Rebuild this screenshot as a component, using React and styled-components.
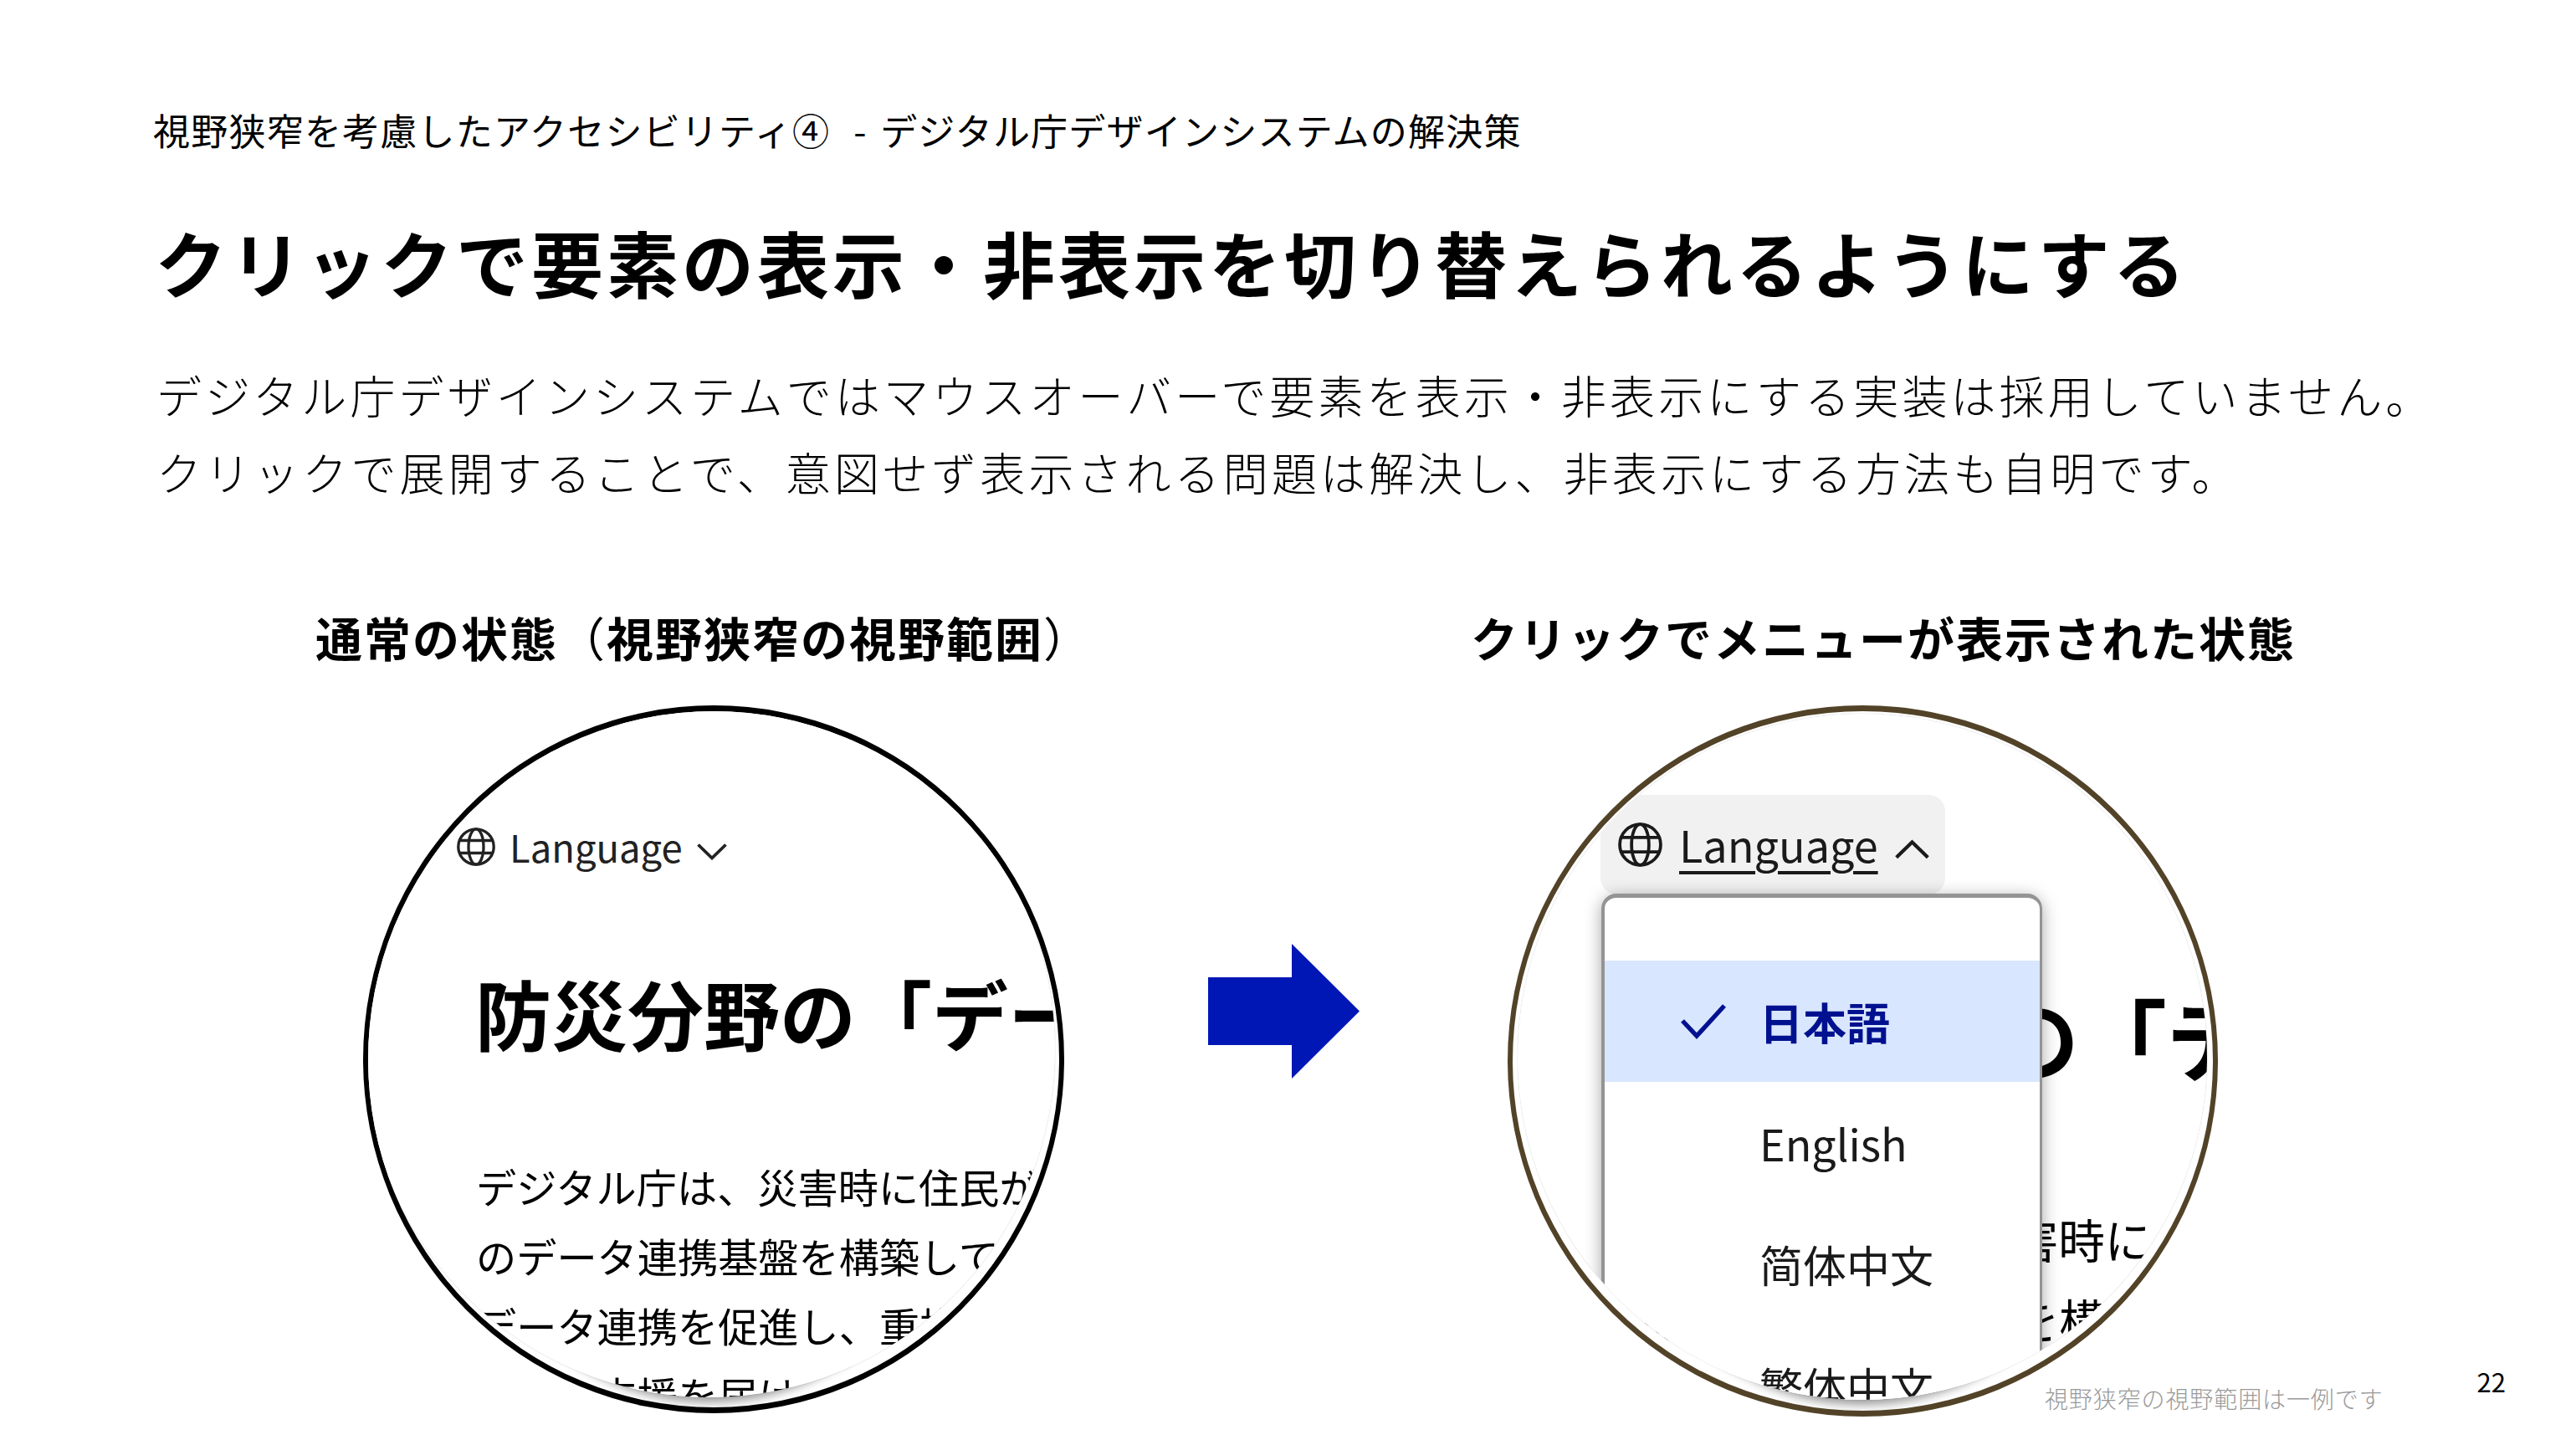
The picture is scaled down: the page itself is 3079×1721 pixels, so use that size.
import React from "react";
import styled, { createGlobalStyle } from "styled-components";

const GlobalStyle = createGlobalStyle`
    body {
        margin: 0;
        background: #fff;
        color: #000;
        font-family: "Noto Sans CJK JP", sans-serif;
    }
`

const Slide = styled.main`
    box-sizing: border-box;
    width: 3079px;
    height: 1721px;
    padding-top: 125px;
    overflow: hidden;
    background: #fff;
`

const Header = styled.header`
    padding-left: 183px;
    white-space: nowrap;
`

const Eyebrow = styled.p`
    margin: 0;
    font-size: 44px;
    line-height: 60px;
    letter-spacing: 1.22px;
`

const Dash = styled.span`
    display: inline-block;
    width: 60px;
    padding-left: 28px;
    box-sizing: border-box;
`

const Title = styled.h1`
    margin: 68px 0 0 2px;
    font-size: 86px;
    font-weight: 700;
    line-height: 120px;
    letter-spacing: 4px;
`

const Lead = styled.p`
    margin: 53px 0 0 4px;
    font-size: 54px;
    font-weight: 300;
    line-height: 92px;
    letter-spacing: 4.12px;
`

const Stage = styled.section`
    display: flex;
    align-items: flex-start;
    margin-top: 111px;
    padding-left: 434px;
`

const Figure = styled.figure`
    display: flex;
    flex-direction: column;
    gap: 42px;
    width: ${props => props.$width}px;
    margin: 0;
`

const Caption = styled.figcaption`
    margin-left: ${props => props.$shift}px;
    font-size: 56px;
    font-weight: 700;
    line-height: 80px;
    letter-spacing: 2px;
    white-space: nowrap;
`

const Paren = styled.span`
    font-weight: 400;
`

const Lens = styled.div`
    box-sizing: border-box;
    height: ${props => props.$height}px;
    border: solid ${props => props.$color};
    border-width: 7px 6px;
    border-radius: 50%;
    overflow: hidden;
`

// round cutout of the page seen through the lens
const View = styled.div`
    position: relative;
    box-sizing: border-box;
    border-radius: 50%;
    overflow: hidden;
    background: #fff;
    white-space: nowrap;
`

const ViewShadow = styled.div`
    width: ${props => props.$w}px;
    height: ${props => props.$h}px;
    margin: ${props => props.$offset};
    border-radius: 50%;
    box-shadow: 0 0 1px rgba(0, 0, 0, 0.45), 0 120px 12px -114px rgba(0, 0, 0, 0.4);

    ${View} {
        height: 100%;
    }
`

const LanguageLabel = styled.div`
    display: flex;
    align-items: center;
    gap: 17px;
    height: 64px;
    padding: 142px 0 0 111px;
    color: #222;
    font-size: 45.4px;
    line-height: 64px;
`

const LanguageButton = styled.div`
    display: flex;
    align-items: center;
    gap: 20px;
    box-sizing: border-box;
    width: 412px;
    height: 119px;
    margin: 97px 0 0 99px;
    padding-left: 21px;
    border-radius: 20px;
    background: #f1f1f1;
    color: #1a1a1a;
    font-size: 52.2px;
    line-height: 72px;
`

const LanguageText = styled.span`
    margin-bottom: 3px;
    text-decoration: ${props => (props.$underlined ? "underline" : "none")};
    text-decoration-thickness: 4px;
    text-underline-offset: 10px;
`

const ChevronSvg = styled.svg`
    margin-top: 11px;
`

const PageTitle = styled.h2`
    margin: ${props => (props.$large ? "98px 0 0 146px" : "105px 0 0 133px")};
    font-size: ${props => (props.$large ? 105 : 91)}px;
    font-weight: 700;
    line-height: ${props => (props.$large ? 140 : 120)}px;
`

const PageText = styled.p`
    margin: ${props => (props.$large ? "125px 0 0 147px" : "107px 0 0 134px")};
    font-size: ${props => (props.$large ? 55.6 : 48.2)}px;
    line-height: ${props => (props.$large ? 96 : 83)}px;
`

const Continued = styled.span`
    padding-left: 3em;
`

const Menu = styled.ul`
    position: absolute;
    top: 215px;
    left: 100px;
    box-sizing: border-box;
    width: 527px;
    height: 760px;
    margin: 0;
    padding: 75px 0 0;
    border: solid #949494;
    border-width: 5px 3px 4px 4px;
    border-radius: 18px;
    background: #fff;
    box-shadow: 0 4px 20px rgba(0, 0, 0, 0.35);
    list-style: none;
`

const MenuItem = styled.li`
    display: flex;
    align-items: center;
    gap: 40px;
    height: 145.4px;
    padding-left: 91px;
    background: ${props => (props.$selected ? "#d9e6ff" : "none")};
    color: ${props => (props.$selected ? "#00118f" : "#1a1a1a")};
    font-size: 52px;
    font-weight: ${props => (props.$selected ? 700 : 400)};
    line-height: 72px;
`

const CheckSlot = styled.span`
    display: flex;
    width: 54px;
`

const ArrowSvg = styled.svg`
    flex: none;
    margin: 407px 177px 0 172px;
`

const Footer = styled.footer`
    display: flex;
    justify-content: flex-end;
    align-items: flex-start;
    gap: 112px;
    margin-top: -62px;
    padding-right: 84px;
`

const Note = styled.small`
    margin-top: 20px;
    color: #999;
    font-size: 28px;
    font-weight: 300;
    line-height: 40px;
    letter-spacing: 0.9px;
`

const PageNumber = styled.span`
    font-size: 31px;
    line-height: 40px;
`

function Globe({ size }) {
    return (
        <svg width={size} height={size} viewBox="0 0 46 46" fill="none" stroke="currentColor" strokeWidth="3.3">
            <circle cx="23" cy="23" r="21.2" />
            <ellipse cx="23" cy="23" rx="9" ry="21.2" />
            <path d="M3 15.5h40M3 30.5h40" />
        </svg>
    );
}

function Chevron({ up, width, height }) {
    return (
        <ChevronSvg width={width} height={height} viewBox="0 0 36 20" fill="none" stroke="currentColor" strokeWidth="3.7">
            <path d={up ? "M1.5 18.5 18 2.5 34.5 18.5" : "M1.5 1.5 18 17.5 34.5 1.5"} />
        </ChevronSvg>
    );
}

function Check() {
    return (
        <svg width="54" height="42" viewBox="0 0 54 42" fill="none" stroke="currentColor" strokeWidth="5.4">
            <path d="M2 20 19 38 52 2" />
        </svg>
    );
}

function Arrow() {
    return (
        <ArrowSvg width="181" height="161" viewBox="0 0 181 161">
            <path d="M0 40h100V0l81 80.500L100 161v-40H0z" fill="#0017b5" />
        </ArrowSvg>
    );
}

// the large page is cut off sooner on the right
function PageBody({ large }) {
    return (
        <>
            <PageTitle $large={large}>防災分野の「デー</PageTitle>
            <PageText $large={large}>
                デジタル庁は、災害時に{!large && "住民が"}
                <br />
                のデータ連携基盤を構{!large && "築して"}
                {!large && (
                    <>
                        <br />
                        データ連携を促進し、重複
                        <br />
                        <Continued>支援を届け</Continued>
                    </>
                )}
            </PageText>
        </>
    );
}

const languages = ["日本語", "English", "简体中文", "繁体中文"];

function LanguageMenu({ selected }) {
    return (
        <Menu>
            {languages.map(language => (
                <MenuItem key={language} $selected={language === selected}>
                    <CheckSlot>{language === selected && <Check />}</CheckSlot>
                    {language}
                </MenuItem>
            ))}
        </Menu>
    );
}

function App() {
    return (
        <Slide lang="ja">
            <GlobalStyle />
            <Header>
                <Eyebrow>
                    視野狭窄を考慮したアクセシビリティ④<Dash>-</Dash>デジタル庁デザインシステムの解決策
                </Eyebrow>
                <Title>クリックで要素の表示・非表示を切り替えられるようにする</Title>
                <Lead>
                    デジタル庁デザインシステムではマウスオーバーで要素を表示・非表示にする実装は採用していません。
                    <br />
                    クリックで展開することで、意図せず表示される問題は解決し、非表示にする方法も自明です。
                </Lead>
            </Header>
            <Stage>
                <Figure $width={838}>
                    <Caption $shift={-57}>
                        通常の状態<Paren>（</Paren>視野狭窄の視野範囲<Paren>）</Paren>
                    </Caption>
                    <Lens $height={846} $color="#000">
                        <ViewShadow $w={826} $h={832} $offset="-12px 0 0 -5px">
                            <View>
                                <LanguageLabel>
                                    <Globe size={46} />
                                    <LanguageText>Language</LanguageText>
                                    <Chevron width={36} height={20} />
                                </LanguageLabel>
                                <PageBody />
                            </View>
                        </ViewShadow>
                    </Lens>
                </Figure>
                <Arrow />
                <Figure $width={849}>
                    <Caption $shift={-44}>クリックでメニューが表示された状態</Caption>
                    <Lens $height={850} $color="#524328">
                        <ViewShadow $w={824} $h={820} $offset="3px 0 0 6px">
                            <View>
                                <LanguageButton>
                                    <Globe size={53} />
                                    <LanguageText $underlined>Language</LanguageText>
                                    <Chevron up width={41} height={24} />
                                </LanguageButton>
                                <PageBody large />
                                <LanguageMenu selected="日本語" />
                            </View>
                        </ViewShadow>
                    </Lens>
                </Figure>
            </Stage>
            <Footer>
                <Note>視野狭窄の視野範囲は一例です</Note>
                <PageNumber>22</PageNumber>
            </Footer>
        </Slide>
    );
}

export default App;
